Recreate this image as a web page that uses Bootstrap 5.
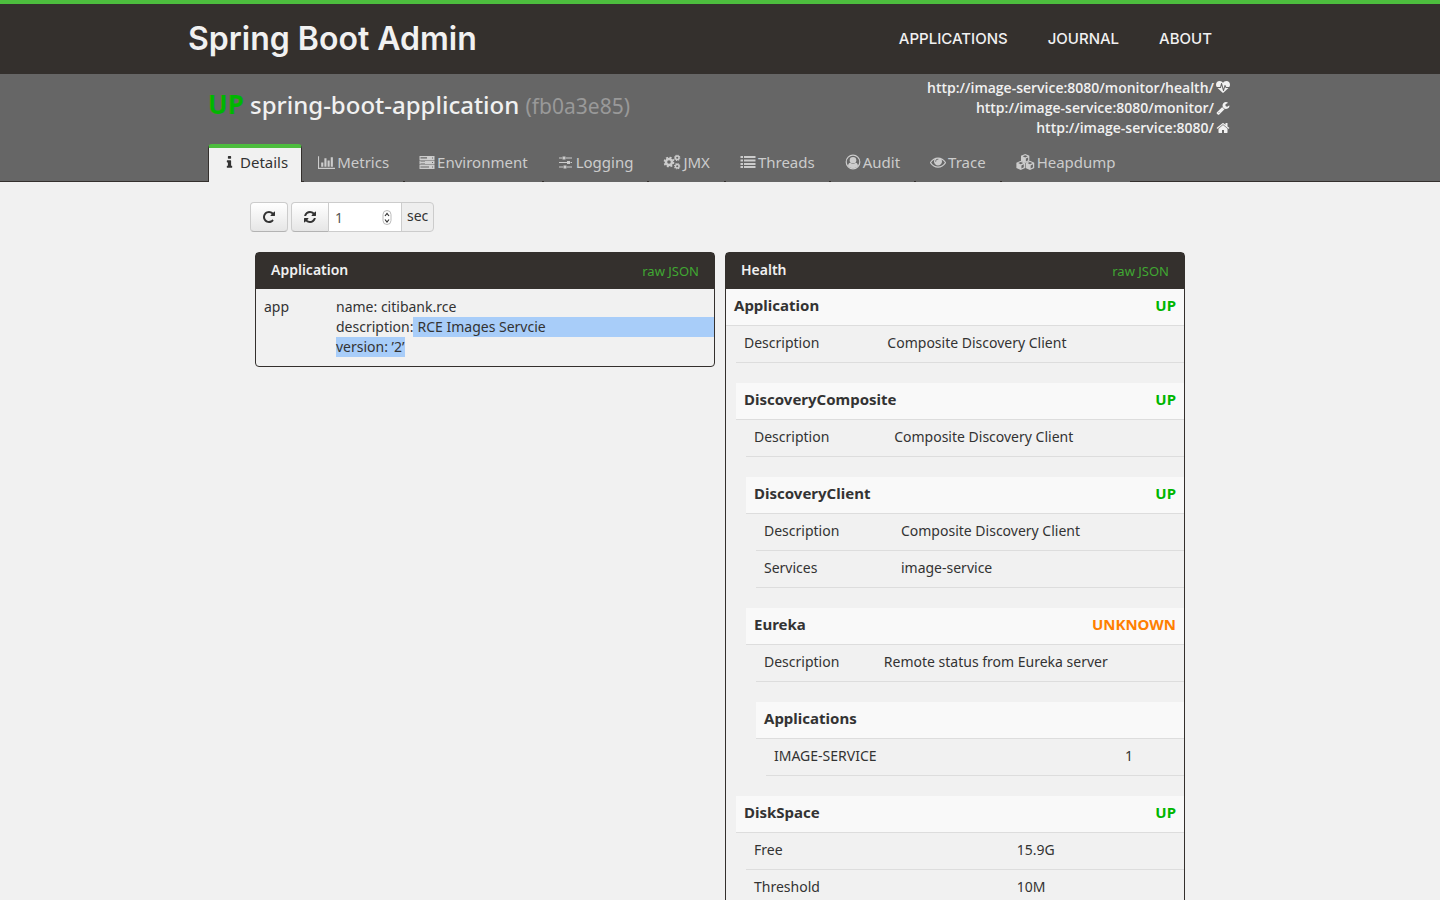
<!DOCTYPE html>
<html lang="en">
<head>
<meta charset="utf-8">
<meta name="viewport" content="width=device-width, initial-scale=1">
<title>Spring Boot Admin</title>
<link href="https://cdn.jsdelivr.net/npm/bootstrap@5.3.0/dist/css/bootstrap.min.css" rel="stylesheet">
<style>
body { background: #f1f1f1; color: #333; font: 14px/20px "Noto Sans", "Open Sans", sans-serif; }
a { text-decoration: none; }
svg { fill: currentColor; flex: none; }
.wrap-wide { max-width: 1024px; }
.wrap-main { max-width: 940px; }
.topbar { background: #34302d; border-top: 4px solid #4dbd3e; }
.topbar .inner { min-height: 70px; }
.topbar a { color: #f1f1f1; }
.brand { font: 600 32px/40px Inter, sans-serif; margin-left: -20px; }
.mainnav a { font: 500 15px/20px Inter, sans-serif; padding: 0 20px; }
.subbar { background: #666; color: #f1f1f1; border-bottom: 1px solid #34302d; }
.apptitle { font-size: 24px; line-height: 32px; font-weight: 500; margin-top: 14px; }
.apptitle small { font-size: 21px; color: #999; font-weight: 400; }
.state-up { color: #00b600; font-weight: 700; }
.apptitle .state-up { font-size: 26px; }
.state-unknown { color: #ff7f00; font-weight: 700; }
.endpoints { padding: 4px 2px 0 0; min-height: 70px; }
.endpoints a { display: flex; align-items: center; gap: 2px; color: #f1f1f1; font-family: "Open Sans", sans-serif; font-weight: 600; }
.tabs { margin-bottom: -1px; gap: 2px; }
.tabs a { display: flex; align-items: center; gap: 2px; height: 38px; padding: 0 14px 2px; background: #666; color: #ccc; font-size: 15px; white-space: nowrap; }
.tabs a.active { background: #f1f1f1; color: #333; border: 1px solid #34302d; border-width: 0 1px; border-top: 4px solid #4dbd3e; border-radius: 4px 4px 0 0; padding: 0 13px 6px 12px; }
.toolbar { gap: 3px; padding: 20px 0; }
.btn-tool { width: 38px; height: 30px; padding: 0; border: 1px solid #ccc; border-bottom-color: #b3b3b3; border-radius: 4px; background: linear-gradient(#fff, #e6e6e6); color: #333; display: flex; align-items: center; justify-content: center; }
.refresh { height: 30px; }
.refresh .btn-tool { border-radius: 4px 0 0 4px; }
.secbox { width: 74px; margin-left: -1px; }
.secbox input { width: 100%; height: 30px; border: 1px solid #ccc; border-radius: 0; padding: 0 6px; color: #555; background: #fff; appearance: textfield; }
.secbox input::-webkit-inner-spin-button { appearance: none; }
.secbox svg { right: 9px; top: 8px; }
.unit { border: 1px solid #ccc; border-radius: 0 4px 4px 0; margin-left: -1px; padding: 3px 5px; background: #eee; }
.panel-col { padding: 0 5px; }
.panel { border: 1px solid #34302d; border-radius: 4px; }
.panel-head { background: #34302d; color: #f1f1f1; padding: 7px 15px; height: 36px; }
.panel-head h2 { font-size: 14px; line-height: 20px; font-weight: 600; margin: 0; }
.panel-head a { color: #40a832; font-size: 13px; line-height: 22px; }
.tbl { width: 100%; table-layout: fixed; margin: 0; }
.tbl th, .tbl td { padding: 8px 8px 9px; font-weight: 400; vertical-align: top; }
.app-label { width: 72px; }
.tbl td.flush-end { padding-right: 0; }
.sel { background: #a8cdf9; }
.node-head { background: #f9f9f9; border-bottom: 1px solid #ddd; padding: 6px 8px; height: 37px; font-size: 15px; }
.node-head h3 { font-size: 15px; line-height: 20px; font-weight: 700; margin: 0; }
.node-body { margin-left: 10px; }
.node-body > .tbl { margin-bottom: 20px; }
.node-body tr { border-bottom: 1px solid #ddd; }
.node-body th, .node-body td { padding: 7px 8px 9px; }
.c-wide { width: 32%; }
.c-slim { width: 28%; }
.c-most { width: 84%; }
.c-half { width: 60%; }
</style>
</head>
<body>
<svg class="d-none" aria-hidden="true">
  <symbol id="i-gear" viewBox="0 0 20 20"><circle cx="10" cy="10" r="5.500" fill="none" stroke="currentColor" stroke-width="4.500"/><circle cx="10" cy="10" r="8.400" fill="none" stroke="currentColor" stroke-width="3.200" stroke-dasharray="3.600 2.998"/></symbol>
  <symbol id="i-cube" viewBox="0 0 20 20"><path fill-rule="evenodd" d="M10 0L19.500 4V15.500L10 20L.5 15.500V4ZM10 2.500L4.500 5L10 7.600L15.500 5ZM11.500 10V16.500L16.500 14V7.500Z"/></symbol>
</svg>
<header class="topbar">
  <div class="wrap-wide inner container-fluid px-0 d-flex align-items-center justify-content-between">
    <a class="brand" href="#">Spring Boot Admin</a>
    <nav class="mainnav d-flex" aria-label="Main"><a href="#">APPLICATIONS</a><a href="#">JOURNAL</a><a href="#">ABOUT</a></nav>
  </div>
</header>
<div class="subbar">
  <div class="wrap-wide container-fluid px-0">
    <div class="d-flex justify-content-between">
      <h1 class="apptitle mb-0"><span class="state-up">UP</span> spring-boot-application <small>(fb0a3e85)</small></h1>
      <div class="endpoints d-flex flex-column align-items-end">
        <a href="#">http://image-service:8080/monitor/health/<svg width="14" height="14" viewBox="0 0 1792 1792"><path d="M1280 896h305q-5 6-10 10.500t-9 7.500l-3 4-623 600q-18 18-44 18t-44-18l-624-602q-5-2-21-20h369q22 0 39.500-13.500t22.500-34.500l70-281 190 667q6 20 23 33t39 13q21 0 38-13t23-33l146-485 56 112q18 35 57 35zm512-428q0 145-103 300h-369l-111-221q-8-17-25.500-27t-36.500-8q-45 5-56 46l-129 430-196-686q-6-20-23.500-33t-39.500-13-39 13.500-22 34.500l-116 464h-423q-103-155-103-300 0-220 127-344t351-124q62 0 126.500 21.500t120 58 95.500 68.500 76 68q36-36 76-68t95.500-68.500 120-58 126.500-21.500q224 0 351 124t127 344z"/></svg></a>
        <a href="#">http://image-service:8080/monitor/<svg width="14" height="14" viewBox="0 0 1792 1792"><path d="M448 1472q0-26-19-45t-45-19-45 19-19 45 19 45 45 19 45-19 19-45zm644-420l-682 682q-37 37-90 37-52 0-91-37l-106-108q-38-36-38-90 0-53 38-91l681-681q39 98 114.500 173.500t173.500 114.500zm634-435q0 39-23 106-47 134-164.500 217.500t-258.500 83.500q-185 0-316.500-131.500t-131.500-316.500 131.500-316.500 316.500-131.500q58 0 121.500 16.500t107.500 46.500q16 11 16 28t-16 28l-293 169v224l193 107q5-3 79-48.500t135.500-81 70.500-35.500q15 0 23.500 10t8.500 25z"/></svg></a>
        <a href="#">http://image-service:8080/<svg width="14" height="14" viewBox="0 0 1792 1792"><path d="M1472 992v480q0 26-19 45t-45 19h-384v-384h-256v384h-384q-26 0-45-19t-19-45v-480q0-1 .5-3t.5-3l575-474 575 474q1 2 1 6zm223-69l-62 74q-8 9-21 11h-3q-13 0-21-7l-692-577-692 577q-12 8-24 7-13-2-21-11l-62-74q-8-10-7-23.500t11-21.500l719-599q32-26 76-26t76 26l244 204v-195q0-14 9-23t23-9h192q14 0 23 9t9 23v408l219 182q10 8 11 21.500t-7 23.500z"/></svg></a>
      </div>
    </div>
    <nav class="tabs d-flex" aria-label="Application">
      <a class="active" href="#" aria-current="page"><svg width="17" height="15" viewBox="0 0 1792 1792"><path d="M1216 1344v128q0 26-19 45t-45 19h-512q-26 0-45-19t-19-45v-128q0-26 19-45t45-19h64v-384h-64q-26 0-45-19t-19-45v-128q0-26 19-45t45-19h384q26 0 45 19t19 45v576h64q26 0 45 19t19 45zm-128-1152v192q0 26-19 45t-45 19h-256q-26 0-45-19t-19-45v-192q0-26 19-45t45-19h256q26 0 45 19t19 45z"/></svg>Details</a>
      <a href="#"><svg width="17" height="15" viewBox="0 0 2048 1792"><path d="M640 896v512h-256v-512h256zm384-512v1024h-256v-1024h256zm1024 1152v128h-2048v-1536h128v1408h1920zm-640-896v768h-256v-768h256zm384-384v1152h-256v-1152h256z"/></svg>Metrics</a>
      <a href="#"><svg width="16" height="14" viewBox="0 0 16 14"><path fill-rule="evenodd" d="M.5 1H15.500V5H.5ZM1.500 2V2.700H8V2ZM1.500 3.500V4H8V3.500ZM13 2.500V3.500H14V2.500ZM.5 5.500H15.500V9.500H.5ZM1.500 6.500V7H6V6.500ZM1.500 8V8.500H6V8ZM13 7V8H14V7ZM.5 10H15.500V14H.5ZM1.500 11V11.500H10V11ZM1.500 12.500V13H10V12.500ZM13 11.500V12.500H14V11.500Z"/></svg>Environment</a>
      <a href="#"><svg width="16" height="14" viewBox="0 0 16 14"><path d="M1 2.500H4V3.500H1ZM4.500 1.500H7.500V4.500H4.500ZM8 2.500H14V3.500H8ZM1 7H9V8H1ZM9 6H12V9H9ZM12.500 7H14V8H12.500ZM1 11.500H5V12.500H1ZM5.500 10.500H8.500V13.500H5.500ZM9 11.500H14V12.500H9Z"/></svg>Logging</a>
      <a href="#"><svg width="18" height="16" viewBox="0 0 17 16"><use href="#i-gear" x="0" y="2.500" width="11" height="11"/><use href="#i-gear" x="10.500" y="0.500" width="6.500" height="6.500"/><use href="#i-gear" x="10.500" y="9" width="6.500" height="6.500"/></svg>JMX</a>
      <a href="#"><svg width="16" height="14" viewBox="0 0 16 14"><path d="M.5 1H3V3H.5ZM4 1H15.500V3H4ZM.5 4.500H3V6.500H.5ZM4 4.500H15.500V6.500H4ZM.5 8H3V10H.5ZM4 8H15.500V10H4ZM.5 11H3V13H.5ZM4 11H15.500V13H4Z"/></svg>Threads</a>
      <a href="#"><svg width="16" height="16" viewBox="0 0 16 16"><circle cx="8" cy="8" r="6.800" fill="none" stroke="currentColor" stroke-width="1.200"/><circle cx="8" cy="6.300" r="3.300"/><path d="M3 12.500C3 10 4 9 5.200 8.800Q8 11 10.800 8.800C12 9 13 10 13 12.500Q8 16 3 12.500Z"/></svg>Audit</a>
      <a href="#"><svg width="16" height="16" viewBox="0 0 1792 1792"><path d="M1664 960q-152-236-381-353 61 104 61 225 0 185-131.500 316.500t-316.500 131.500-316.500-131.500-131.500-316.500q0-121 61-225-229 117-381 353 133 205 333.500 326.500t434.500 121.500 434.500-121.500 333.500-326.500zm-720-384q0-20-14-34t-34-14q-125 0-214.500 89.500t-89.500 214.500q0 20 14 34t34 14 34-14 14-34q0-86 61-147t147-61q20 0 34-14t14-34zm848 384q0 34-20 69-140 230-376.500 368.500t-499.500 138.500-499.500-139-376.500-368q-20-35-20-69t20-69q140-229 376.500-368t499.500-139 499.500 139 376.500 368q20 35 20 69z"/></svg>Trace</a>
      <a href="#"><svg width="19" height="16" viewBox="0 0 19 16"><use href="#i-cube" x="4.700" y="0" width="9" height="9"/><use href="#i-cube" x="0" y="6.800" width="9.500" height="9.200"/><use href="#i-cube" x="9.200" y="6.800" width="9.500" height="9.200"/></svg>Heapdump</a>
    </nav>
  </div>
</div>
<main class="wrap-main container-fluid px-0">
  <div class="d-flex align-items-start toolbar">
    <button class="btn-tool" type="button" aria-label="Reload"><svg width="14" height="14" viewBox="0 0 1792 1792"><path d="M1664 256v448q0 26-19 45t-45 19h-448q-42 0-59-40-17-39 14-69l138-138q-148-137-349-137-104 0-198.500 40.500t-163.500 109.500-109.500 163.500-40.500 198.500 40.500 198.500 109.500 163.500 163.500 109.500 198.500 40.500q119 0 225-52t179-147q7-10 23-12 15 0 25 9l137 138q9 8 9.500 20.500t-7.500 22.500q-109 132-264 204.500t-327 72.500q-156 0-298-61t-245-164-164-245-61-298 61-298 164-245 245-164 298-61q147 0 284.500 55.500t244.500 156.500l130-129q29-31 70-14 39 17 39 59z"/></svg></button>
    <div class="refresh d-flex">
      <button class="btn-tool" type="button" aria-label="Auto refresh"><svg width="14" height="14" viewBox="0 0 1792 1792"><path d="M1639 1056q0 5-1 7-64 268-268 434.500t-478 166.500q-146 0-282.500-55t-243.500-157l-129 129q-19 19-45 19t-45-19-19-45v-448q0-26 19-45t45-19h448q26 0 45 19t19 45-19 45l-137 137q71 66 161 102t187 36q134 0 250-65t186-179q11-17 53-117 8-23 30-23h192q13 0 22.500 9.500t9.500 22.500zm25-800v448q0 26-19 45t-45 19h-448q-26 0-45-19t-19-45 19-45l138-138q-148-137-349-137-134 0-250 65t-186 179q-11 17-53 117-8 23-30 23h-199q-13 0-22.500-9.500t-9.500-22.500v-7q65-268 270-434.500t480-166.500q146 0 284 55.500t245 156.500l130-129q19-19 45-19t45 19 19 45z"/></svg></button>
      <div class="secbox position-relative"><input id="interval" type="number" value="1" min="1"><svg class="position-absolute" width="11" height="16" viewBox="0 0 11 16"><rect x="1" y=".5" width="8" height="14" rx="4" fill="#fff" stroke="#bbb"/><path d="M3 6L5 3.500L7 6M3 9.500L5 12L7 9.500" fill="none" stroke="#333" stroke-width="1.200"/></svg></div>
      <label class="unit" for="interval">sec</label>
    </div>
  </div>
  <div class="row g-0 align-items-start">
    <div class="col-6 panel-col">
      <section class="panel">
        <div class="panel-head d-flex justify-content-between"><h2>Application</h2><a href="#">raw JSON</a></div>
        <table class="tbl"><colgroup><col class="app-label"><col></colgroup>
          <tr><th scope="row">app</th><td class="flush-end"><div>name: citibank.rce</div><div class="d-flex"><span>description:</span><span class="sel flex-grow-1 ps-1">RCE Images Servcie</span></div><div><span class="sel d-inline-block">version: ’2’</span></div></td></tr>
        </table>
      </section>
    </div>
    <div class="col-6 panel-col">
      <section class="panel">
        <div class="panel-head d-flex justify-content-between"><h2>Health</h2><a href="#">raw JSON</a></div>
        <div class="node-head d-flex justify-content-between"><h3>Application</h3><span class="state-up">UP</span></div>
        <div class="node-body">
          <table class="tbl"><colgroup><col class="c-wide"><col></colgroup><tr><th scope="row">Description</th><td>Composite Discovery Client</td></tr></table>
          <div class="node-head d-flex justify-content-between"><h3>DiscoveryComposite</h3><span class="state-up">UP</span></div>
          <div class="node-body">
            <table class="tbl"><colgroup><col class="c-wide"><col></colgroup><tr><th scope="row">Description</th><td>Composite Discovery Client</td></tr></table>
            <div class="node-head d-flex justify-content-between"><h3>DiscoveryClient</h3><span class="state-up">UP</span></div>
            <div class="node-body">
              <table class="tbl"><colgroup><col class="c-wide"><col></colgroup><tr><th scope="row">Description</th><td>Composite Discovery Client</td></tr><tr><th scope="row">Services</th><td>image-service</td></tr></table>
            </div>
            <div class="node-head d-flex justify-content-between"><h3>Eureka</h3><span class="state-unknown">UNKNOWN</span></div>
            <div class="node-body">
              <table class="tbl"><colgroup><col class="c-slim"><col></colgroup><tr><th scope="row">Description</th><td>Remote status from Eureka server</td></tr></table>
              <div class="node-head"><h3>Applications</h3></div>
              <div class="node-body">
                <table class="tbl"><colgroup><col class="c-most"><col></colgroup><tr><th scope="row">IMAGE-SERVICE</th><td>1</td></tr></table>
              </div>
            </div>
          </div>
          <div class="node-head d-flex justify-content-between"><h3>DiskSpace</h3><span class="state-up">UP</span></div>
          <div class="node-body">
            <table class="tbl"><colgroup><col class="c-half"><col></colgroup><tr><th scope="row">Free</th><td>15.9G</td></tr><tr><th scope="row">Threshold</th><td>10M</td></tr></table>
          </div>
        </div>
      </section>
    </div>
  </div>
</main>
<script src="https://cdn.jsdelivr.net/npm/bootstrap@5.3.0/dist/js/bootstrap.bundle.min.js"></script>
</body>
</html>
